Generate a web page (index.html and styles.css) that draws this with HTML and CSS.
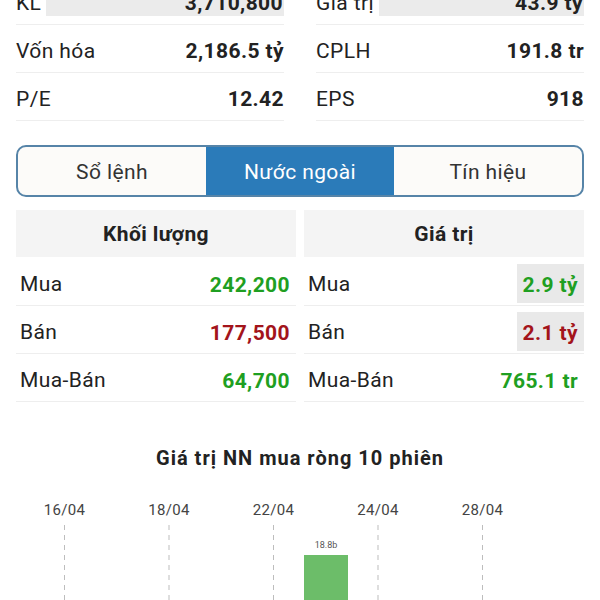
FILE: index.html
```html
<!DOCTYPE html>
<html lang="vi">
<head>
<meta charset="utf-8">
<link rel="stylesheet" href="styles.css">
</head>
<body>
<div class="stats">
  <div class="col">
    <div class="srow"><span class="lbl">KL</span><span class="val flash">3,710,800</span></div>
    <div class="srow"><span class="lbl">Vốn hóa</span><span class="val">2,186.5 tỷ</span></div>
    <div class="srow"><span class="lbl">P/E</span><span class="val">12.42</span></div>
  </div>
  <div class="col">
    <div class="srow"><span class="lbl">Giá trị</span><span class="val flash">43.9 tỷ</span></div>
    <div class="srow"><span class="lbl">CPLH</span><span class="val">191.8 tr</span></div>
    <div class="srow"><span class="lbl">EPS</span><span class="val">918</span></div>
  </div>
</div>

<div class="tabs">
  <div class="tab">Sổ lệnh</div>
  <div class="tab active">Nước ngoài</div>
  <div class="tab">Tín hiệu</div>
</div>

<div class="foreign">
  <div class="table">
    <div class="thead">Khối lượng</div>
    <div class="trow"><span class="lbl">Mua</span><span class="num up">242,200</span></div>
    <div class="trow"><span class="lbl">Bán</span><span class="num down">177,500</span></div>
    <div class="trow"><span class="lbl">Mua-Bán</span><span class="num up">64,700</span></div>
  </div>
  <div class="table">
    <div class="thead">Giá trị</div>
    <div class="trow"><span class="lbl">Mua</span><span class="num up hl">2.9 tỷ</span></div>
    <div class="trow"><span class="lbl">Bán</span><span class="num down hl">2.1 tỷ</span></div>
    <div class="trow"><span class="lbl">Mua-Bán</span><span class="num up">765.1 tr</span></div>
  </div>
</div>

<div class="chart">
  <h3 class="chart-title">Giá trị NN mua ròng 10 phiên</h3>
  <svg class="chart-svg" width="600" height="132" viewBox="0 0 600 132">
    <g class="dates">
      <text x="64.5" y="45">16/04</text>
      <text x="169" y="45">18/04</text>
      <text x="273.5" y="45">22/04</text>
      <text x="378" y="45">24/04</text>
      <text x="482.5" y="45">28/04</text>
    </g>
    <g class="grid">
      <line x1="64.5" y1="55" x2="64.5" y2="132"/>
      <line x1="169" y1="55" x2="169" y2="132"/>
      <line x1="273.5" y1="55" x2="273.5" y2="132"/>
      <line x1="378" y1="55" x2="378" y2="132"/>
      <line x1="482.5" y1="55" x2="482.5" y2="132"/>
    </g>
    <rect class="bar" x="304" y="85" width="44" height="47"/>
    <text class="bar-label" x="326" y="78">18.8b</text>
  </svg>
</div>
</body>
</html>
```
FILE: styles.css
```css
html, body {
  margin: 0;
  padding: 0;
  background: #ffffff;
}
body {
  width: 600px;
  height: 600px;
  overflow: hidden;
  font-family: Roboto, "Noto Sans", "Liberation Sans", sans-serif;
  color: #222;
  letter-spacing: 0.4px;
}
.stats {
  margin-top: -23px;
  padding: 0 16px;
  display: grid;
  grid-template-columns: 1fr 1fr;
  column-gap: 32px;
}
.srow {
  height: 47px;
  border-bottom: 1px solid #eeeeee;
  display: flex;
  align-items: stretch;
  font-size: 21px;
}
.srow .lbl {
  padding-top: 4px;
  line-height: 44px;
  white-space: nowrap;
}
.srow .val {
  margin-left: auto;
  font-weight: 700;
  padding-top: 4px;
  line-height: 44px;
  text-align: right;
  white-space: nowrap;
}
.srow .val.flash {
  flex: 1;
  margin-left: 5px;
  margin-bottom: 8px;
  line-height: 36px;
  padding-top: 8px;
  padding-right: 1px;
  box-sizing: border-box;
  background: #ebebeb;
}
.tabs {
  margin: 24px 16px 0;
  height: 48px;
  border: 2px solid #5684a8;
  border-radius: 10px;
  overflow: hidden;
  display: flex;
  background: #fcfbf9;
}
.tab {
  flex: 1;
  display: flex;
  align-items: center;
  justify-content: center;
  font-size: 21px;
  color: #333;
  padding-top: 1px;
}
.tab.active {
  background: #2b7bb9;
  color: #fff;
}
.foreign {
  margin: 13px 16px 0;
  display: grid;
  grid-template-columns: 1fr 1fr;
  column-gap: 8px;
}
.thead {
  height: 47px;
  background: #f4f4f4;
  display: flex;
  align-items: center;
  justify-content: center;
  font-weight: 700;
  font-size: 21px;
  color: #222;
}
.trow {
  height: 47px;
  border-bottom: 1px solid #eeeeee;
  display: flex;
  align-items: center;
  padding-left: 4px;
  font-size: 21px;
}
.trow:nth-child(2) {
  margin-top: 1px;
}
.trow .lbl {
  padding-top: 4px;
}
.num {
  margin-left: auto;
  font-weight: 700;
  padding: 0 6px;
  height: 39px;
  line-height: 43px;
  margin-top: 4px;
}
.num.up { color: #1f9f22; }
.num.down { color: #a3141b; }
.num.hl { background: #e9e9e9; }
.chart {
  background: #fff;
}
.chart-title {
  margin: 44px 0 0;
  height: 24px;
  line-height: 24px;
  text-align: center;
  font-size: 20px;
  letter-spacing: 1px;
  font-weight: 700;
  color: #222;
}
.chart-svg {
  display: block;
}
.dates text {
  font-family: Roboto, "Noto Sans", sans-serif;
  font-size: 15px;
  letter-spacing: 0.3px;
  fill: #444;
  text-anchor: middle;
}
.grid line {
  stroke: #bdbdbd;
  stroke-width: 1;
  stroke-dasharray: 5 5;
}
.bar {
  fill: #6cbd69;
}
.bar-label {
  font-family: Roboto, sans-serif;
  font-size: 9px;
  letter-spacing: 0;
  fill: #555;
  text-anchor: middle;
}
```
